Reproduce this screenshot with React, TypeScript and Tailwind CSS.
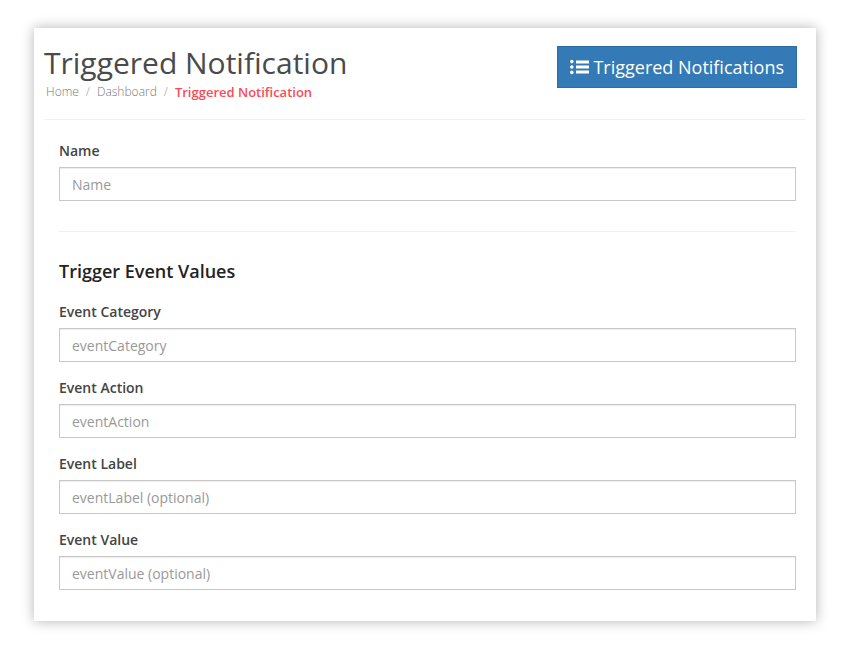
const fields = [
  { label: "Event Category", placeholder: "eventCategory" },
  { label: "Event Action", placeholder: "eventAction" },
  { label: "Event Label", placeholder: "eventLabel (optional)" },
  { label: "Event Value", placeholder: "eventValue (optional)" },
];

function ListIcon() {
  return (
    <svg width="19" height="16" viewBox="0 0 19 16" fill="currentColor" className="shrink-0">
      <circle cx="1.8" cy="2.6" r="1.8" />
      <circle cx="1.8" cy="8" r="1.8" />
      <circle cx="1.8" cy="13.4" r="1.8" />
      <rect x="6" y="1.5" width="13" height="3" />
      <rect x="6" y="6.5" width="13" height="3" />
      <rect x="6" y="11.5" width="13" height="3" />
    </svg>
  );
}

function Field({ label, placeholder }: { label: string; placeholder: string }) {
  return (
    <div className="mb-[16px]">
      <label className="block h-[20px] mb-[6px] text-[14px] leading-[20px] font-semibold text-[#444]">{label}</label>
      <input
        placeholder={placeholder}
        className="block w-full h-[34px] px-3 border border-[#c8c8c8] bg-white text-[14px] outline-none shadow-[inset_0_1px_1px_rgba(0,0,0,0.075)] placeholder:text-[#999]"
      />
    </div>
  );
}

export default function App() {
  return (
    <div className="min-h-[650px] bg-white pt-[28px] px-[34px] font-['Open_Sans',sans-serif]">
      <div className="w-[782px] h-[593px] bg-white px-[10px] shadow-[0_0_12px_rgba(0,0,0,0.3)]">
        {/* Header */}
        <div className="flex justify-between h-[92px] border-b border-[#f0f0f0]">
          <div>
            <h1 className="mt-[14px] text-[30px] leading-[42px] text-[#4a4a4a]">Triggered Notification</h1>
            <div className="flex items-center pl-[2px] text-[12px] leading-[16px] font-light text-[#777]">
              <span>Home</span>
              <span className="mx-[7px] text-[#999]">/</span>
              <span>Dashboard</span>
              <span className="mx-[7px] text-[#999]">/</span>
              <span className="text-[13px] font-semibold text-[#fb4a57]">Triggered Notification</span>
            </div>
          </div>
          <button className="flex items-center gap-[4px] h-[42px] mt-[18px] mr-[9px] px-[12px] bg-[#337ab7] border border-[#2e6da4] text-[18px] text-white">
            <ListIcon />
            Triggered Notifications
          </button>
        </div>

        {/* Form */}
        <div className="pl-[15px] pr-[10px] pt-[21px]">
          <Field label="Name" placeholder="Name" />
          <hr className="mt-[30px] mb-[26px] border-[#f0f0f0]" />
          <h2 className="h-[26px] mb-[18px] text-[18px] leading-[26px] font-semibold text-[#222]">Trigger Event Values</h2>
          <div>
            {fields.map((f) => (
              <Field key={f.label} label={f.label} placeholder={f.placeholder} />
            ))}
          </div>
        </div>
      </div>
    </div>
  );
}
